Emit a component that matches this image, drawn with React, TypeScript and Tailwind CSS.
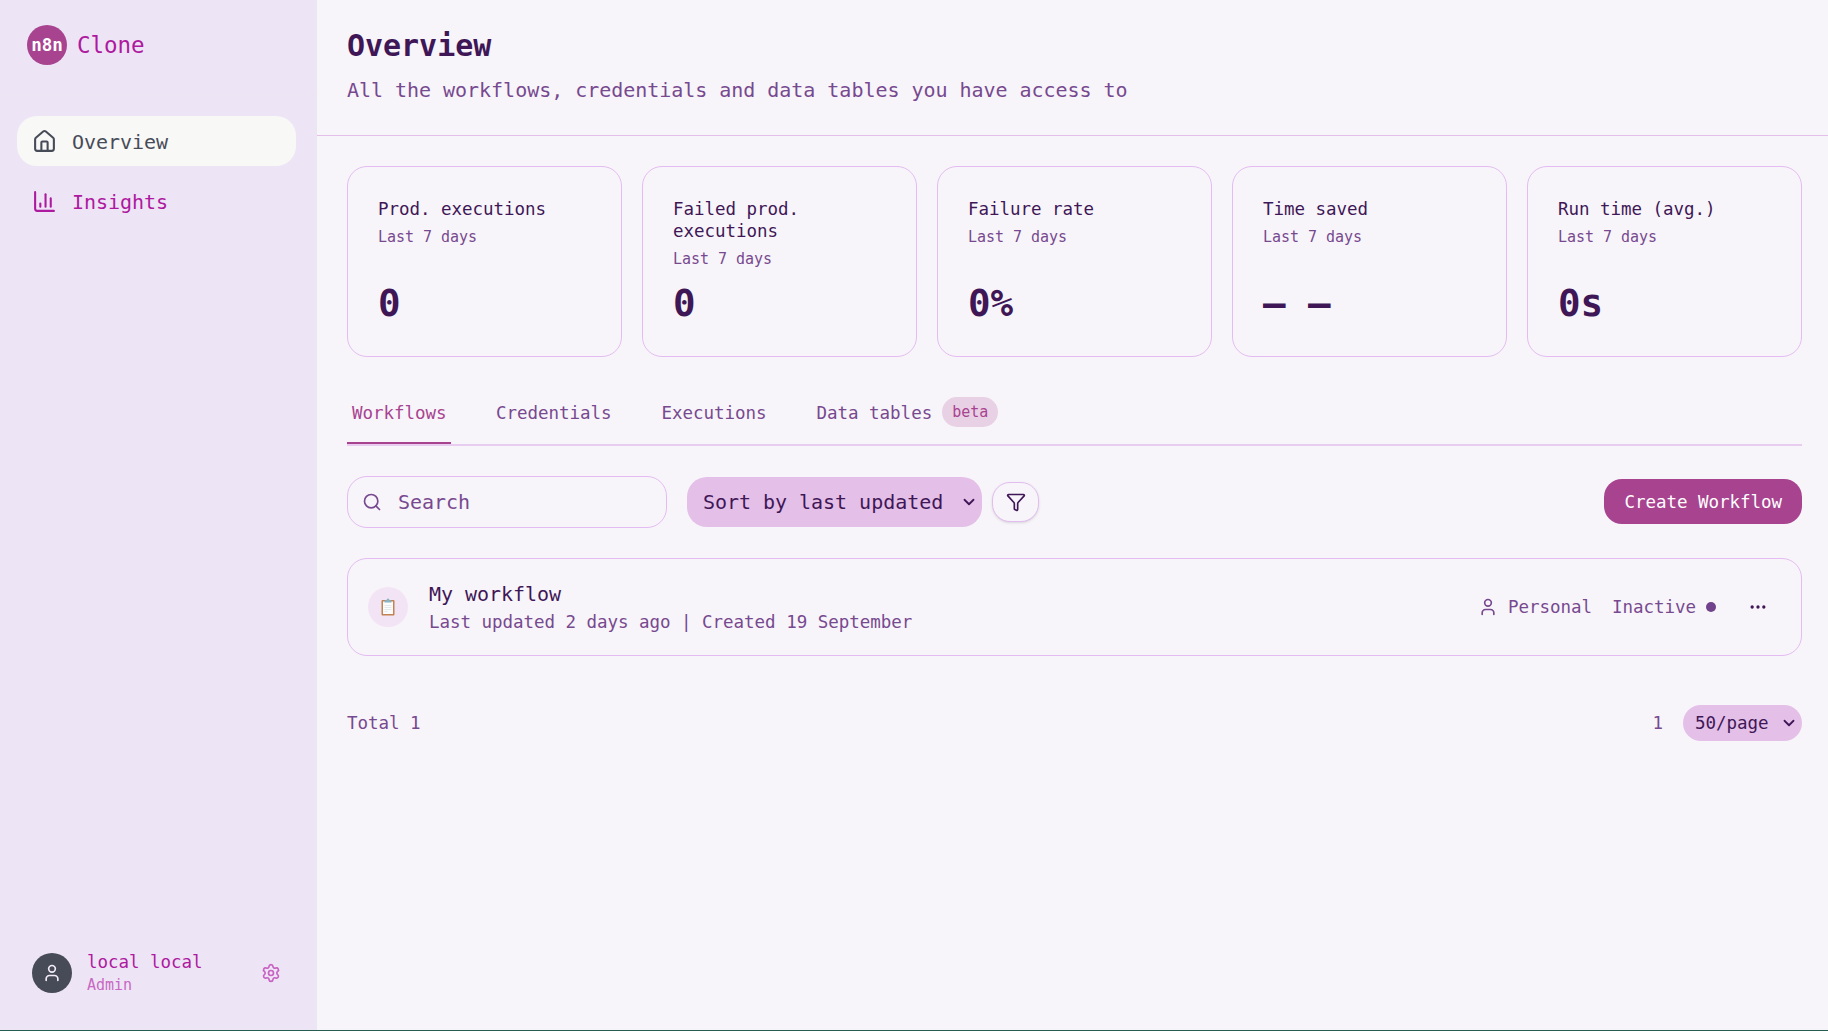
import { ChartColumn, ChevronDown, Ellipsis, Funnel, House, Search, Settings, User } from "lucide-react";

const stats = [
  { title: "Prod. executions", value: "0" },
  { title: "Failed prod. executions", value: "0" },
  { title: "Failure rate", value: "0%" },
  { title: "Time saved", value: "— —" },
  { title: "Run time (avg.)", value: "0s" },
];

function Sidebar() {
  return (
    <aside className="flex w-[317px] shrink-0 flex-col border-r border-[#eae7ef] bg-[#ede4f5] text-[#ad1a9f]">
      <div className="flex h-[95px] items-center gap-2.5 border-b border-[#eae5f0] pb-1 pl-[27px]">
        <div className="flex size-10 items-center justify-center rounded-full bg-[#a84390] pt-px text-[17.5px] font-bold text-white">
          <span>n8n</span>
        </div>
        <span className="pt-0.5 text-[22.5px]">Clone</span>
      </div>
      <nav className="flex flex-col gap-2.5 pt-[21px] pr-5 pl-[17px] text-[20px]">
        <a className="flex h-[50px] items-center gap-[15px] rounded-[20px] bg-[#f8f8f7] pl-[15px] text-[#474b57]">
          <House size={25} strokeWidth={2} />
          <span className="pt-px">Overview</span>
        </a>
        <a className="flex h-[50px] items-center gap-[15px] pl-[15px]">
          <ChartColumn size={25} strokeWidth={2} />
          <span className="pt-px">Insights</span>
        </a>
      </nav>
      <div className="mt-auto flex h-[115px] items-center pr-[35px] pl-8">
        <div className="flex size-10 items-center justify-center rounded-full bg-[#474b57] text-[#f3eaf7]">
          <User size={20} />
        </div>
        <div className="ml-[15px] flex flex-col">
          <span className="text-[17.5px] leading-[22px]">local local</span>
          <span className="mt-0.5 text-[15px] leading-[20px] text-[#c968c4]">Admin</span>
        </div>
        <Settings size={20} className="ml-auto text-[#c862c3]" />
      </div>
    </aside>
  );
}

function StatCard({ title, value }: { title: string; value: string }) {
  return (
    <div className="flex h-[191px] flex-col rounded-[20px] border border-[#e4bcf1] px-[30px] pt-[31px] pb-[30px]">
      <div className="text-[17.5px] leading-[22px]">{title}</div>
      <div className="mt-1.5 text-[15px] leading-[22px] text-[#77498f]">Last 7 days</div>
      <div className="mt-auto text-[37.5px] leading-[45px] font-bold">{value}</div>
    </div>
  );
}

export default function App() {
  return (
    <div className="flex h-[1031px] w-[1828px] overflow-hidden border-b border-[#245c50] bg-[#f7f5fa] font-['DejaVu_Sans_Mono',monospace] tracking-[-0.002em] whitespace-nowrap text-[#3f1757]">
      <Sidebar />
      <main className="flex min-w-0 flex-1 flex-col">
        <header className="flex h-[136px] flex-col border-b border-[#e4bfe9] pt-[26px] pl-[30px]">
          <h1 className="text-[30px] leading-[40px] font-bold">Overview</h1>
          <p className="mt-[9px] text-[20px] leading-[30px] text-[#77498f]">
            All the workflows, credentials and data tables you have access to
          </p>
        </header>
        <div className="flex flex-col pt-[30px] pr-[26px] pl-[30px]">
          <section className="grid grid-cols-5 gap-5 whitespace-normal">
            {stats.map((s) => (
              <StatCard key={s.title} {...s} />
            ))}
          </section>

          <div className="mt-[30px] flex h-[59px] gap-10 border-b-2 border-[#e9cdf0] text-[17.5px] text-[#77498f]">
            <div className="flex h-[57px] w-[104px] items-center border-b-2 border-[#a84390] px-[5px] pb-[3px] text-[#a84390]">Workflows</div>
            <div className="flex h-[57px] items-center px-[5px] pb-[5px]">Credentials</div>
            <div className="flex h-[57px] items-center px-[5px] pb-[5px]">Executions</div>
            <div className="flex h-[57px] items-center gap-2.5 px-[5px] pb-[5px]">
              Data tables
              <span className="-mt-0.5 flex h-[30px] w-14 items-center justify-center rounded-[15px] bg-[#e8d1e5] text-[15px] text-[#a84390]">beta</span>
            </div>
          </div>

          <div className="mt-[30px] flex h-[52px] items-center">
            <div className="flex h-[52px] w-[320px] items-center gap-4 rounded-[20px] border border-[#e4bcf1] pl-[14px] text-[20px] text-[#77498f]">
              <Search size={20} />
              <span>Search</span>
            </div>
            <div className="ml-5 flex h-[50px] w-[295px] items-center justify-between rounded-[20px] bg-[#e4bfe8] pr-1 pl-4 text-[20px]">
              <span>Sort by last updated</span>
              <ChevronDown size={18} strokeWidth={2.4} />
            </div>
            <button className="ml-2.5 flex h-10 w-[47px] items-center justify-center rounded-[18px] border border-[#e4bcf1] bg-[#f7f5fa] shadow-sm">
              <Funnel size={20} />
            </button>
            <button className="-mt-px mr-0 ml-auto h-[45px] rounded-[18px] bg-[#a84390] px-5 pt-0.5 text-[17.5px] tracking-[-0.002em] text-white">
              Create Workflow
            </button>
          </div>

          <section className="mt-[30px] flex h-[98px] items-center rounded-[20px] border border-[#e4bcf1] pr-[33px] pl-5">
            <div className="flex size-10 items-center justify-center rounded-full bg-[#f2e4f5]">
              <Clipboard />
            </div>
            <div className="ml-[21px] flex flex-col">
              <span className="text-[20px] leading-[30px]">My workflow</span>
              <span className="text-[17.5px] leading-[26px] text-[#77498f]">Last updated 2 days ago | Created 19 September</span>
            </div>
            <div className="ml-auto flex items-center text-[17.5px] text-[#77498f]">
              <User size={20} />
              <span className="ml-2.5 pt-px">Personal</span>
              <span className="ml-5 pt-px">Inactive</span>
              <span className="ml-2.5 size-2.5 rounded-full bg-[#70438c]" />
              <Ellipsis size={20} className="ml-8 text-[#3f1757]" />
            </div>
          </section>

          <footer className="mt-[49px] flex h-9 items-center text-[17.5px] text-[#77498f]">
            <span className="pt-px">Total 1</span>
            <span className="ml-auto pt-px">1</span>
            <div className="ml-5 flex h-9 w-[119px] items-center justify-between rounded-[18px] bg-[#e4bfe8] pr-1 pl-3 text-[#3f1757]">
              <span className="pt-px">50/page</span>
              <ChevronDown size={18} strokeWidth={2.4} />
            </div>
          </footer>
        </div>
      </main>
    </div>
  );
}

function Clipboard() {
  return (
    <svg width="14" height="18" viewBox="0 0 14 18">
      <rect x="0.5" y="2" width="13" height="15.5" rx="1" fill="#c48250" />
      <rect x="2" y="3.5" width="10" height="12.5" fill="#fafcfd" />
      <path d="M3.5 7.5h7M3.5 9.5h7M3.5 11.5h7M3.5 13.5h3" stroke="#dde2e6" strokeWidth="0.8" />
      <path d="M3.5 4.5v-1.500q0-.8.8-.8h1.200q.2-1.700 1.500-1.700t1.500 1.700h1.200q.8 0 .8.800v1.500z" fill="#88b4c6" />
    </svg>
  );
}
